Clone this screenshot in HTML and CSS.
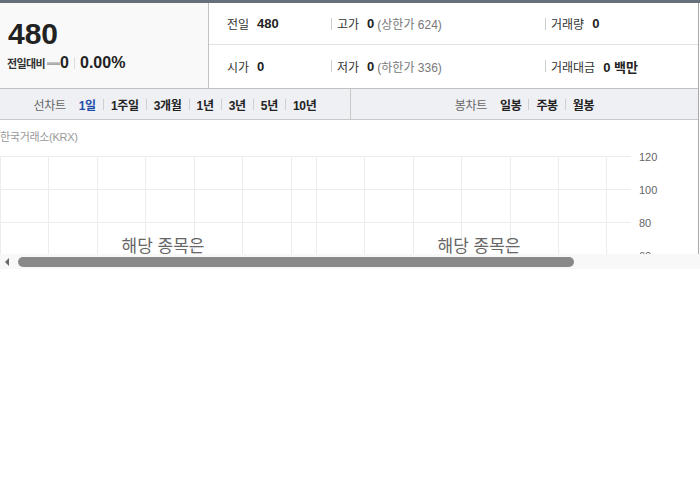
FILE: index.html
```html
<!DOCTYPE html>
<html lang="ko">
<head>
<meta charset="utf-8">
<link rel="stylesheet" href="styles.css">
</head>
<body>
<div class="strip"></div>
<div class="wrap">
  <div class="summary">
    <div class="price">
      <div class="now">480</div>
      <div class="change">
        <span class="chg-label">전일대비</span>
        <span class="flat"></span>
        <span class="chg-val">0</span>
        <span class="vsep"></span>
        <span class="chg-val">0.00%</span>
      </div>
    </div>
    <div class="stats">
      <div class="cell c1 r1"><span class="lb">전일</span><b>480</b></div>
      <div class="cell c2 r1"><span class="lb">고가</span><b>0</b><span class="sub">(상한가 624)</span></div>
      <div class="cell c3 r1"><span class="lb">거래량</span><b>0</b></div>
      <div class="cell c1"><span class="lb">시가</span><b>0</b></div>
      <div class="cell c2"><span class="lb">저가</span><b>0</b><span class="sub">(하한가 336)</span></div>
      <div class="cell c3"><span class="lb">거래대금</span><b>0 백만</b></div>
    </div>
  </div>
  <div class="tabs">
    <div class="tabgroup left">
      <span class="tab-title">선차트</span>
      <span class="tab on">1일</span><span class="tsep"></span>
      <span class="tab">1주일</span><span class="tsep"></span>
      <span class="tab">3개월</span><span class="tsep"></span>
      <span class="tab">1년</span><span class="tsep"></span>
      <span class="tab">3년</span><span class="tsep"></span>
      <span class="tab">5년</span><span class="tsep"></span>
      <span class="tab">10년</span>
    </div>
    <div class="tabgroup">
      <span class="tab-title">봉차트</span>
      <span class="tab">일봉</span><span class="tsep"></span>
      <span class="tab">주봉</span><span class="tsep"></span>
      <span class="tab">월봉</span>
    </div>
  </div>
  <div class="chart">
    <div class="chart-label">한국거래소(KRX)</div>
    <svg class="grid" width="698" height="108" viewBox="0 0 698 108">
      <g stroke="#ececec" stroke-width="1" fill="none">
        <line x1="0" y1="10.5" x2="631" y2="10.5"/>
        <line x1="0" y1="43.5" x2="631" y2="43.5"/>
        <line x1="0" y1="76.5" x2="631" y2="76.5"/>
        <line x1="0.5" y1="10" x2="0.5" y2="108"/>
        <line x1="48.5" y1="10" x2="48.5" y2="108"/>
        <line x1="97.5" y1="10" x2="97.5" y2="108"/>
        <line x1="145.5" y1="10" x2="145.5" y2="108"/>
        <line x1="194.5" y1="10" x2="194.5" y2="108"/>
        <line x1="242.5" y1="10" x2="242.5" y2="108"/>
        <line x1="291.5" y1="10" x2="291.5" y2="108"/>
        <line x1="316.5" y1="10" x2="316.5" y2="108"/>
        <line x1="364.5" y1="10" x2="364.5" y2="108"/>
        <line x1="413.5" y1="10" x2="413.5" y2="108"/>
        <line x1="461.5" y1="10" x2="461.5" y2="108"/>
        <line x1="510.5" y1="10" x2="510.5" y2="108"/>
        <line x1="558.5" y1="10" x2="558.5" y2="108"/>
        <line x1="606.5" y1="10" x2="606.5" y2="108"/>
      </g>
      <g class="axis">
        <text x="639" y="15">120</text>
        <text x="639" y="48">100</text>
        <text x="639" y="81">80</text>
        <text x="639" y="114">60</text>
      </g>
      <g class="msg">
        <text x="163" y="106">해당 종목은</text>
        <text x="479" y="106">해당 종목은</text>
      </g>
    </svg>
  </div>
</div>
<div class="scroll">
  <span class="arrow"></span>
  <span class="thumb"></span>
</div>
</body>
</html>
```
FILE: styles.css
```css
body {
  margin: 0;
  font-family: "Liberation Sans", "Noto Sans CJK KR", sans-serif;
  color: #222;
  background: #fff;
}
.strip {
  width: 700px;
  height: 3px;
  background: #676f7b;
}
.wrap {
  width: 699px;
  box-sizing: border-box;
  border-right: 1px solid #a8a8a8;
}
.summary {
  display: flex;
  height: 85px;
  border-bottom: 1px solid #c2c2c2;
}
.price {
  width: 200px;
  padding-left: 8px;
  background: #f9f9f9;
  border-right: 1px solid #c2c2c2;
}
.now {
  font-size: 30px;
  line-height: 30px;
  font-weight: bold;
  margin-top: 16px;
  color: #222;
}
.change {
  display: flex;
  align-items: center;
  height: 20px;
  margin-top: 4px;
}
.chg-label {
  font-size: 11px;
  font-weight: bold;
  color: #333;
  letter-spacing: -0.6px;
  margin-left: -1px;
}
.flat {
  width: 13px;
  height: 3px;
  margin-left: 2px;
  background: linear-gradient(#c8c8c8, #a0a0a0);
}
.chg-val {
  font-size: 16px;
  font-weight: bold;
  color: #222;
}
.vsep {
  width: 1px;
  height: 12px;
  background: #ddd;
  margin: 0 5px;
}
.stats {
  flex: 1;
  display: grid;
  grid-template-columns: 122px 214px 1fr;
  grid-template-rows: 42px 42px;
}
.cell {
  display: flex;
  align-items: center;
  font-size: 12px;
}
.cell.r1 {
  border-bottom: 1px solid #e2e2e2;
}
.cell.c1 {
  padding-left: 18px;
}
.cell.c2::before, .cell.c3::before {
  content: "";
  width: 1px;
  height: 12px;
  background: #cfcfcf;
  margin-right: 5px;
}
.lb {
  color: #333;
  margin-right: 8px;
}
.cell b {
  font-size: 13px;
  color: #222;
}
.sub {
  color: #777;
  margin-left: 3px;
}
.tabs {
  display: flex;
  height: 30px;
  background: #eff0f4;
  border-bottom: 1px solid #c8c8c8;
}
.tabgroup {
  flex: 1;
  display: flex;
  align-items: center;
  justify-content: center;
  font-size: 12px;
  letter-spacing: -0.3px;
}
.tabgroup.left {
  flex: 0 0 350px;
  border-right: 1px solid #c8c8c8;
}
.tab-title {
  color: #666;
  margin-right: 13px;
}
.tab {
  font-weight: bold;
  color: #222;
}
.tab.on {
  color: #1e4ca8;
}
.tsep {
  width: 1px;
  height: 11px;
  background: #cfcfcf;
  margin: 0 7px;
}
.chart {
  height: 134px;
  overflow: hidden;
}
.chart-label {
  height: 26px;
  line-height: 34px;
  font-size: 11px;
  color: #999;
  letter-spacing: -0.3px;
}
.grid {
  display: block;
}
.axis text {
  font-family: "Liberation Sans", sans-serif;
  font-size: 11px;
  fill: #666;
}
.msg text {
  font-family: "Noto Sans CJK KR", sans-serif;
  font-size: 17px;
  fill: #666;
  text-anchor: middle;
}
.scroll {
  width: 700px;
  height: 15px;
  background: #f8f8f8;
  display: flex;
  align-items: center;
}
.arrow {
  width: 0;
  height: 0;
  border-top: 4px solid transparent;
  border-bottom: 4px solid transparent;
  border-right: 4px solid #666;
  margin-left: 5px;
}
.thumb {
  width: 556px;
  height: 10px;
  border-radius: 5px;
  background: #898989;
  margin-left: 9px;
}
```
